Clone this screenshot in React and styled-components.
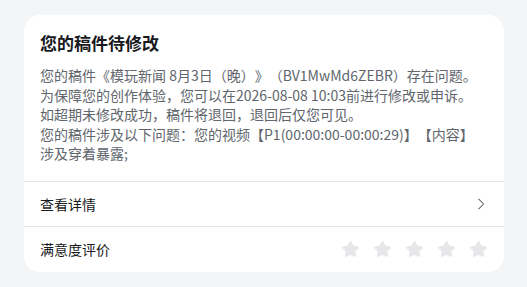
import React from "react";
import styled, { createGlobalStyle } from "styled-components";

const Global = createGlobalStyle`
  html, body { margin: 0; padding: 0; background: #f4f5f7; }
  body { font-family: "Noto Sans CJK SC", "Noto Sans", sans-serif; }
`;

const Page = styled.div`
  width: 527px;
  height: 287px;
  box-sizing: border-box;
  padding: 15px 23px 17px 24px;
`;

const Card = styled.div`
  background: #fff;
  border-radius: 16px;
  overflow: hidden;
  display: flex;
  flex-direction: column;
`;

const Header = styled.div`
  padding: 16px 16px 17px 16px;
  border-bottom: 1px solid #e3e5e7;
`;

const Title = styled.div`
  font-size: 17px;
  line-height: 24px;
  font-weight: 700;
  color: #18191c;
  margin-bottom: 11px;
`;

const Body = styled.div`
  font-size: 14px;
  line-height: 19.5px;
  color: #61666d;
  white-space: nowrap;
  text-spacing-trim: space-all;
`;

const Row = styled.div`
  display: flex;
  align-items: center;
  justify-content: space-between;
  height: ${(p) => p.$h}px;
  padding: 0 16px;
  font-size: 14px;
  color: #18191c;
  border-bottom: ${(p) => (p.$divider ? "1px solid #e3e5e7" : "none")};
`;

const Stars = styled.div`
  display: flex;
  gap: 13px;
`;

const Chevron = styled.svg`
  width: 14px;
  height: 14px;
`;

const Star = () => (
  <svg width="19" height="19" viewBox="0 0 24 24">
    <path
      d="M12 3.2l2.7 5.4 5.9.85-4.3 4.2 1 5.9L12 16.8l-5.3 2.75 1-5.9-4.3-4.2 5.9-.85z"
      fill="#e6e7e9"
      stroke="#e6e7e9"
      strokeWidth="3.4"
      strokeLinejoin="round"
    />
  </svg>
);

export default function App() {
  return (
    <>
      <Global />
      <Page>
        <Card>
          <Header>
            <Title>您的稿件待修改</Title>
            <Body>
              您的稿件《模玩新闻 8月3日（晚）》（BV1MwMd6ZEBR）存在问题。
              <br />
              为保障您的创作体验，您可以在2026-08-08 10:03前进行修改或申诉。
              <br />
              如超期未修改成功，稿件将退回，退回后仅您可见。
              <br />
              您的稿件涉及以下问题：您的视频【P1(00:00:00-00:00:29)】【内容】
              <br />
              涉及穿着暴露;
            </Body>
          </Header>
          <Row $h={44} $divider>
            <span>查看详情</span>
            <Chevron viewBox="0 0 16 16">
              <path d="M5.5 2.5L11 8l-5.5 5.5" fill="none" stroke="#61666d" strokeWidth="1.2" strokeLinecap="round" strokeLinejoin="round" />
            </Chevron>
          </Row>
          <Row $h={45}>
            <span>满意度评价</span>
            <Stars>
              {[0, 1, 2, 3, 4].map((i) => (
                <Star key={i} />
              ))}
            </Stars>
          </Row>
        </Card>
      </Page>
    </>
  );
}
